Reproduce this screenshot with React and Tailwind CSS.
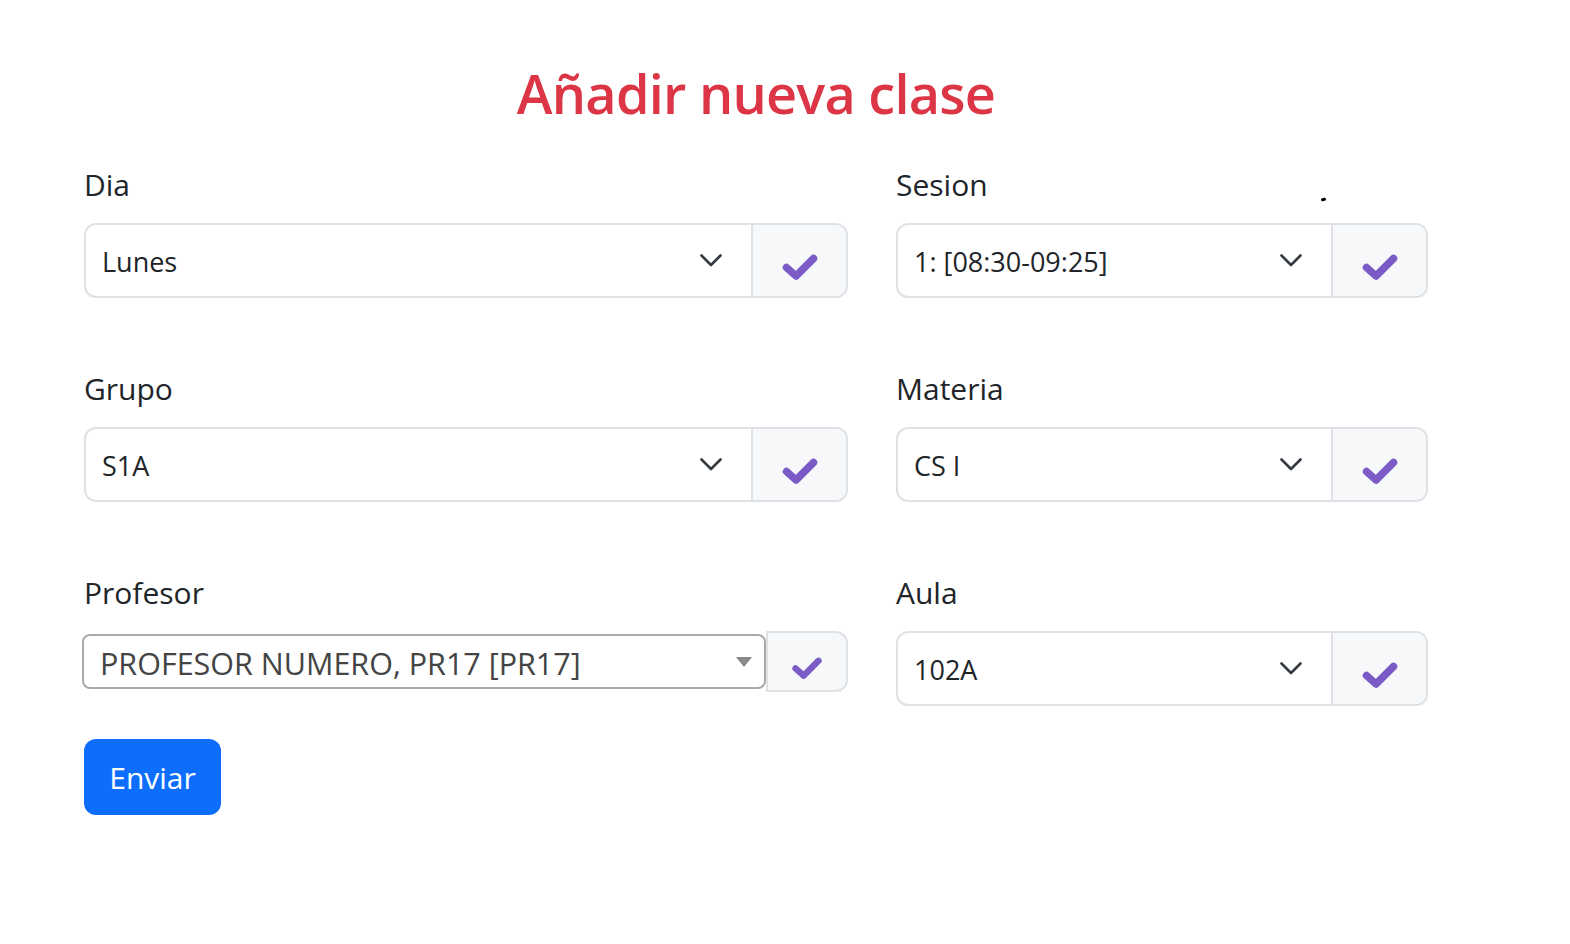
import React from "react";

const FONT = { fontFamily: '"Open Sans", "Noto Sans", Arial, sans-serif' };

function Check({ small = false }) {
  // rounded, heavy check mark used in the confirm buttons
  const w = small ? 34 : 40;
  const h = small ? 26 : 30;
  return (
    <svg
      width={w}
      height={h}
      viewBox="0 0 40 30"
      className="translate-y-[6px]"
      fill="none"
    >
      <path
        d="M6.5 15.5 L16 24 L33.5 6.5"
        stroke="#7b5bc6"
        strokeWidth="7.5"
        strokeLinecap="round"
        strokeLinejoin="round"
      />
    </svg>
  );
}

function Chevron() {
  return (
    <svg width="22" height="13" viewBox="0 0 22 13" fill="none">
      <polyline
        points="1.5,1.5 11,11 20.5,1.5"
        stroke="#343a40"
        strokeWidth="2.6"
        strokeLinecap="round"
        strokeLinejoin="round"
      />
    </svg>
  );
}

function Label({ children }) {
  return (
    <div className="text-[30px] leading-[45px] text-[#212529] mb-[16px]">
      {children}
    </div>
  );
}

function SelectGroup({ label, value }) {
  return (
    <div>
      <Label>{label}</Label>
      <div className="flex h-[75px] border-2 border-[#dee2e6] rounded-[12px] overflow-hidden bg-white">
        <div className="flex-1 flex items-center justify-between pl-[16px] pr-[29px]">
          <span className="text-[27px] text-[#212529] translate-y-[2px]">{value}</span>
          <Chevron />
        </div>
        <div className="w-[95px] border-l-2 border-[#dee2e6] bg-[#f7f8fa] flex items-center justify-center">
          <Check />
        </div>
      </div>
    </div>
  );
}

function ProfesorGroup() {
  return (
    <div>
      <Label>Profesor</Label>
      <div className="flex items-center h-[61px] -ml-[2px]">
        <div className="w-[686px] h-[55px] border-2 border-[#aaaaaa] rounded-[8px] bg-white flex items-center justify-between pl-[16px] pr-[12px]">
          <span className="text-[30.5px] text-[#444444] whitespace-nowrap translate-y-[2px]">
            PROFESOR NUMERO, PR17 [PR17]
          </span>
          <span className="w-0 h-0 border-l-[8px] border-r-[8px] border-t-[10px] border-l-transparent border-r-transparent border-t-[#888888]" />
        </div>
        <div className="w-[82px] h-[61px] border-2 border-[#dee2e6] rounded-r-[12px] bg-[#f7f8fa] flex items-center justify-center">
          <Check small />
        </div>
      </div>
    </div>
  );
}

export default function App() {
  return (
    <div className="relative min-h-[944px] w-full bg-white" style={FONT}>
      <div className="ml-[84px] w-[1344px] pt-[60px]">
        <h1 className="text-center text-[54px] leading-[67px] tracking-[-0.75px] font-semibold text-[#dc3545]">
          Añadir nueva clase
        </h1>

        <div className="mt-[35px] grid grid-cols-[764px_532px] gap-x-[48px] gap-y-[68px]">
          <SelectGroup label="Dia" value="Lunes" />
          <SelectGroup label="Sesion" value="1: [08:30-09:25]" />
          <SelectGroup label="Grupo" value="S1A" />
          <SelectGroup label="Materia" value="CS I" />
          <ProfesorGroup />
          <SelectGroup label="Aula" value="102A" />
        </div>

        <button className="mt-[33px] w-[137px] h-[76px] rounded-[12px] bg-[#0d6efd] text-white text-[30px] flex items-center justify-center">
          Enviar
        </button>
      </div>

      {/* stray mark near the Sesion field */}
      <span className="absolute left-[1321px] top-[198px] w-[5px] h-[3px] rounded-full bg-black -rotate-12" />
    </div>
  );
}
